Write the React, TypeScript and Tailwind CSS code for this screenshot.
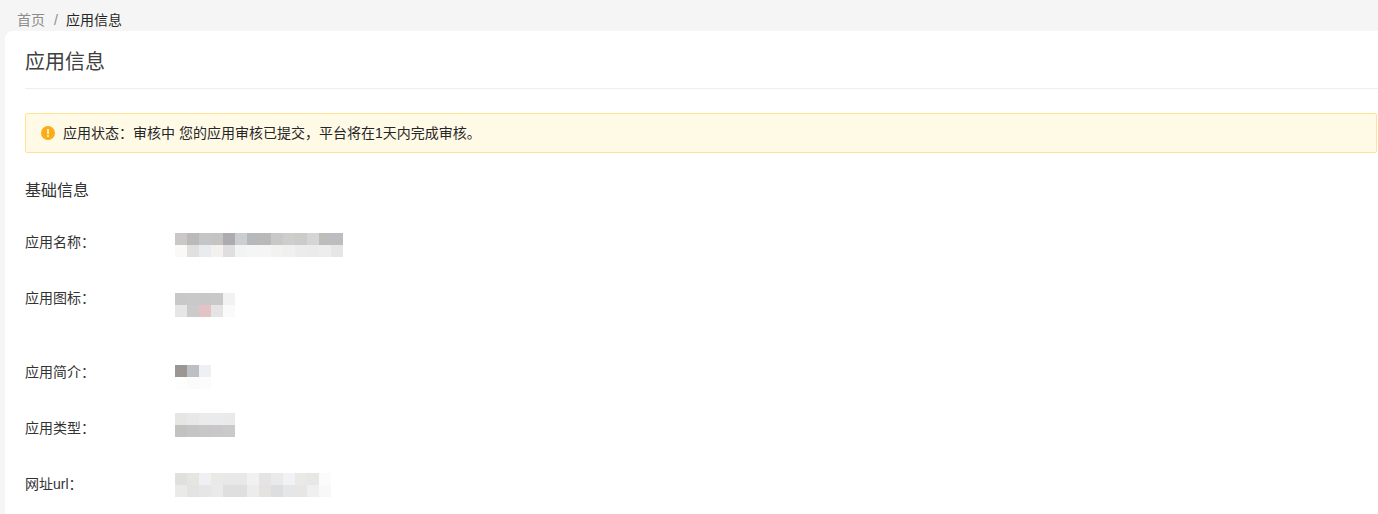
const mosaics = {
  name: [
    ["#c9c8c6", "#bbb9ba", "#c3c6c4", "#c6c4c2", "#aeabae", "#cbced0", "#b6b8bb", "#bbb9b7", "#c8c8c8", "#cdcdcb", "#cbcbc9", "#d5d5d5", "#bdbdbb", "#bcbdc1"],
    ["#f9f9f9", "#e2e0df", "#e9ecef", "#f3f1ee", "#e0dfdf", "#f2f4f4", "#f4f5f5", "#f5f5f5", "#f2f2f0", "#f0f0f0", "#ececec", "#ebebeb", "#ededed", "#e6e6e6"],
  ],
  icon: [
    ["#c8c8c8", "#c9c9c9", "#c8c8c8", "#c9c9c9", "#f2f2f2"],
    ["#e6e6e6", "#cbcbcb", "#e2c4c6", "#e4e4e4", "#fafafa"],
  ],
  intro: [
    ["#9b9594", "#bcc0c4", "#eef0f3"],
    ["#fdfdfb", "#fbfbfb", "#fbfcfb"],
  ],
  type: [
    ["#e6e6e4", "#e8e8e8", "#ebebeb", "#eaebed", "#e9ebeb"],
    ["#c2c2be", "#c5c5c7", "#c9c7c6", "#c8c7ca", "#cacaca"],
  ],
  url: [
    ["#e0e0de", "#e5e5e2", "#eef0f3", "#ebe9e6", "#e8e8e8", "#e8e8e8", "#f0f2f1", "#e6e3e4", "#eaeaeb", "#f0f2f5", "#ebe9e6", "#e7e7e5", "#fafbfc"],
    ["#eaeaea", "#e3e3e1", "#e6e6e7", "#eaeaea", "#dfdfdf", "#dfdfdf", "#ecedeb", "#e4e3df", "#dcdee0", "#e5e6e8", "#e6e6e6", "#efefef", "#f8f8f8"],
  ],
};

function Mosaic({ rows, className }: { rows: string[][]; className?: string }) {
  return (
    <div className={className}>
      {rows.map((row, i) => (
        <div key={i} className="flex">
          {row.map((color, j) => (
            <div key={j} className="w-3 h-3" style={{ backgroundColor: color }} />
          ))}
        </div>
      ))}
    </div>
  );
}

function InfoRow({
  label,
  rows,
  className,
  labelClass,
  valueClass,
}: {
  label: string;
  rows: string[][];
  className: string;
  labelClass?: string;
  valueClass?: string;
}) {
  return (
    <div className={`flex items-start ${className}`}>
      <div className={`w-[150px] shrink-0 text-sm leading-5 text-[#333] ${labelClass ?? ""}`}>{label}：</div>
      <Mosaic rows={rows} className={valueClass} />
    </div>
  );
}

export default function App() {
  return (
    <div className="h-screen overflow-hidden bg-[#f5f5f5] font-['Liberation_Sans','Noto_Sans_CJK_SC',sans-serif]">
      <div className="h-[31px] pl-[17px] pt-2.5 flex items-start text-sm leading-5">
        <span className="text-[#8c8c8c]">首页</span>
        <span className="ml-[9px] mr-2 text-[#8c8c8c]">/</span>
        <span className="text-[#262626]">应用信息</span>
      </div>
      <div className="ml-[5px] h-[483px] bg-white rounded-tl-lg pl-5">
        <div className="h-[58px] border-b border-[#eeeeee] pt-[17px]">
          <h1 className="text-xl leading-7 font-normal text-[#404040]">应用信息</h1>
        </div>
        <div className="mt-6 mr-px h-10 flex items-center gap-2 pl-[15px] bg-[#fffae6] border border-[#ffe391] rounded-[2px]">
          <svg width="14" height="14" viewBox="0 0 14 14" className="shrink-0">
            <circle cx="7" cy="7" r="7" fill="#faad14" />
            <rect x="6.25" y="3" width="1.5" height="5.2" rx="0.6" fill="#fff" />
            <circle cx="7" cy="10" r="0.9" fill="#fff" />
          </svg>
          <span className="text-sm leading-5 text-[#262626]">应用状态：审核中 您的应用审核已提交，平台将在1天内完成审核。</span>
        </div>
        <h2 className="mt-[27px] text-base leading-[22px] font-normal text-[#333]">基础信息</h2>
        <InfoRow label="应用名称" rows={mosaics.name} className="mt-[30px]" valueClass="mt-px" />
        <InfoRow label="应用图标" rows={mosaics.icon} className="mt-[31px]" valueClass="mt-[5px]" />
        <InfoRow label="应用简介" rows={mosaics.intro} className="mt-[45px]" valueClass="mt-[3px]" />
        <InfoRow label="应用类型" rows={mosaics.type} className="mt-6" labelClass="mt-[5px]" />
        <InfoRow label="网址url" rows={mosaics.url} className="mt-[35px]" labelClass="mt-px" />
      </div>
    </div>
  );
}
